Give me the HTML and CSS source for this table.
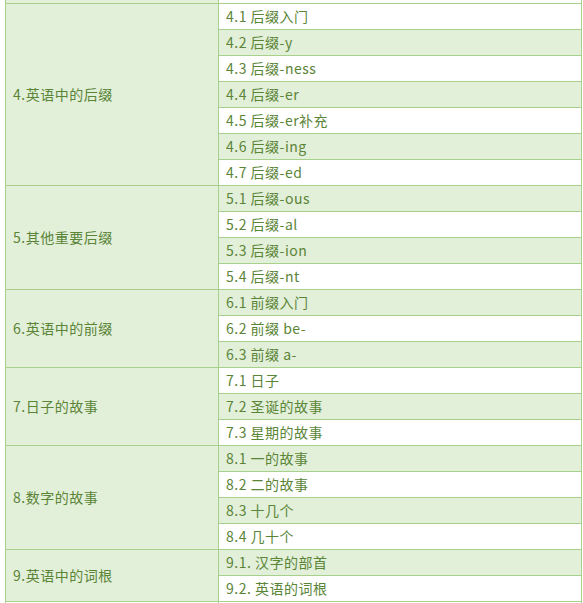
FILE: index.html
```html
<!DOCTYPE html>
<html lang="zh">
<head>
<meta charset="utf-8">
<link rel="stylesheet" href="styles.css">
</head>
<body>
<table class="toc">
  <colgroup><col class="c1"><col class="c2"></colgroup>
  <tr class="stub"><td class="sec"></td><td class="w"></td></tr>
  <tr><td class="sec" rowspan="7">4.英语中的后缀</td><td class="w">4.1 后缀入门</td></tr>
  <tr><td class="g">4.2 后缀-y</td></tr>
  <tr><td class="w">4.3 后缀-ness</td></tr>
  <tr><td class="g">4.4 后缀-er</td></tr>
  <tr><td class="w">4.5 后缀-er补充</td></tr>
  <tr><td class="g">4.6 后缀-ing</td></tr>
  <tr><td class="w">4.7 后缀-ed</td></tr>
  <tr><td class="sec" rowspan="4">5.其他重要后缀</td><td class="g">5.1 后缀-ous</td></tr>
  <tr><td class="w">5.2 后缀-al</td></tr>
  <tr><td class="g">5.3 后缀-ion</td></tr>
  <tr><td class="w">5.4 后缀-nt</td></tr>
  <tr><td class="sec" rowspan="3">6.英语中的前缀</td><td class="g">6.1 前缀入门</td></tr>
  <tr><td class="w">6.2 前缀 be-</td></tr>
  <tr><td class="g">6.3 前缀 a-</td></tr>
  <tr><td class="sec" rowspan="3">7.日子的故事</td><td class="w">7.1 日子</td></tr>
  <tr><td class="g">7.2 圣诞的故事</td></tr>
  <tr><td class="w">7.3 星期的故事</td></tr>
  <tr><td class="sec" rowspan="4">8.数字的故事</td><td class="g">8.1 一的故事</td></tr>
  <tr><td class="w">8.2 二的故事</td></tr>
  <tr><td class="g">8.3 十几个</td></tr>
  <tr><td class="w">8.4 几十个</td></tr>
  <tr><td class="sec" rowspan="2">9.英语中的词根</td><td class="g">9.1. 汉字的部首</td></tr>
  <tr><td class="w">9.2. 英语的词根</td></tr>
  <tr class="tail"><td class="w"></td><td class="w"></td></tr>
</table>
</body>
</html>
```
FILE: styles.css
```css
html, body {
  margin: 0;
  padding: 0;
  background: #ffffff;
}
body {
  overflow: hidden;
  height: 603px;
}
.toc {
  border-collapse: collapse;
  margin-left: 5px;
  margin-top: -1px;
  table-layout: fixed;
  width: 576px;
  font-family: "Noto Sans CJK SC", "Noto Sans", sans-serif;
  font-size: 14px;
  letter-spacing: 0.5px;
  color: #5a8537;
}
.c1 { width: 213px; }
.c2 { width: 363px; }
.toc td {
  border: 1px solid #a8d08d;
  padding: 0 7px;
  height: 26px;
  box-sizing: border-box;
  line-height: 18px;
  vertical-align: middle;
  white-space: nowrap;
}
.toc tr { height: 26px; }
.toc .stub { height: 4px; }
.toc .stub td { height: 4px; border-top: 0; }
.toc td.sec { background: #e2efd9; }
.toc td.g { background: #e2efd9; }
.toc td.w { background: #ffffff; }
.toc .tail td { border-bottom: 0; }
```
